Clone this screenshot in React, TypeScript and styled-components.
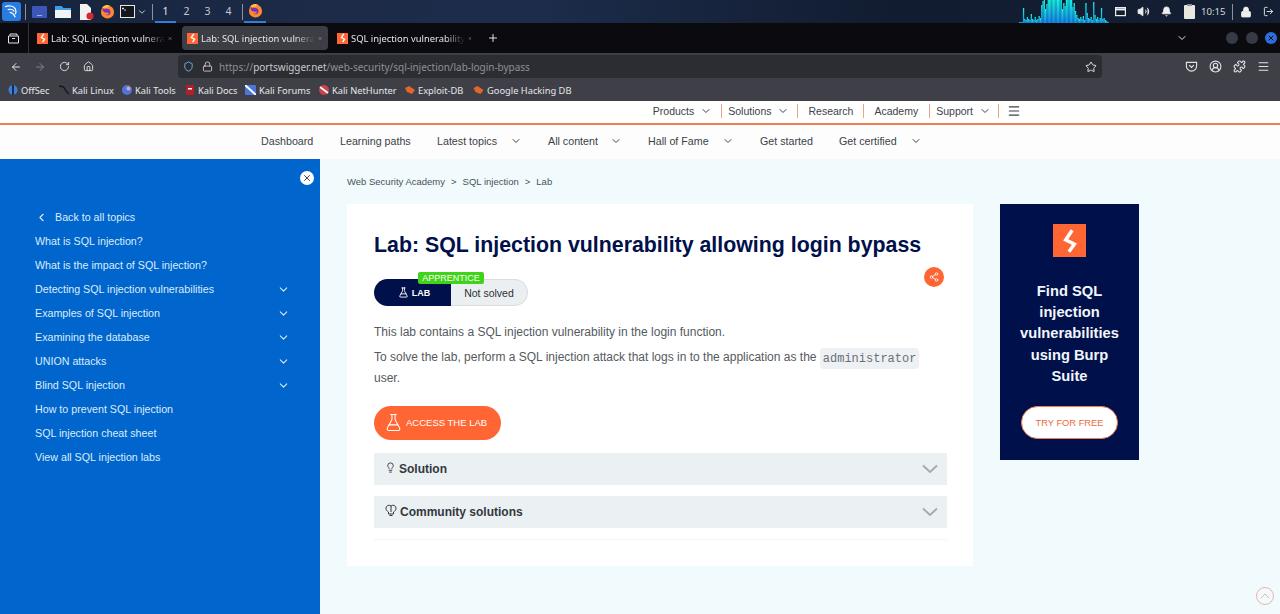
import { FC, ReactNode } from "react";
import styled, { createGlobalStyle } from "styled-components";
import {
  ArrowLeft,
  ArrowRight,
  Bell,
  ChevronDown,
  ChevronLeft,
  ChevronUp,
  FlaskConical,
  House,
  Lightbulb,
  Lock,
  LogOut,
  Menu,
  Plus,
  Puzzle,
  RotateCw,
  Share2,
  Shield,
  Star,
  Volume2,
  X,
  CircleUserRound,
} from "lucide-react";

const navy = "#00104a";
const orange = "#ff6633";
const sans = `"Liberation Sans", Arial, sans-serif`;
const ui = `"Noto Sans", "Open Sans", sans-serif`;

const GlobalStyle = createGlobalStyle`
  html, body {
    margin: 0;
    height: 100%;
    overflow: hidden;
    background: #f1fbfd;
    font-family: ${sans};
  }
  * { box-sizing: border-box; }
`;

const Page = styled.div`
  width: 1280px;
  height: 614px;
  display: flex;
  flex-direction: column;
  overflow: hidden;
  position: relative;
`;

/* desktop panel */
const Panel = styled.div`
  height: 23px;
  flex: none;
  display: flex;
  align-items: center;
  padding: 0 1px 0 2px;
  color: #e6e8ec;
  background: linear-gradient(90deg, #17233c 0%, #1d2b48 25%, #1c2c4a 42%, #111c30 70%, #141f33 100%);
`;

const KaliLogo = styled.div`
  width: 19px;
  height: 19px;
  border-radius: 3px;
  background: #2a7de0;
  display: flex;
  align-items: center;
  justify-content: center;
`;

const PanelSep = styled.div<{ $l: number; $r: number }>`
  width: 1px;
  height: 16px;
  flex: none;
  background: #8b93a3;
  margin: 0 ${(p) => p.$r}px 0 ${(p) => p.$l}px;
`;

const AppGroup = styled.div`
  display: flex;
  align-items: center;
`;

const AppSlot = styled.div<{ $w: number }>`
  width: ${(p) => p.$w}px;
  display: flex;
  align-items: center;
  justify-content: flex-start;
`;

const ActiveApp = styled.div`
  width: 22px;
  height: 23px;
  display: flex;
  align-items: center;
  justify-content: center;
  border-bottom: 2px solid #2f7de0;
`;

const Workspace = styled.div<{ $on?: boolean }>`
  width: 21px;
  height: 23px;
  font: 10.5px ${ui};
  color: ${(p) => (p.$on ? "#e8e8e8" : "#c3c8d2")};
  display: flex;
  align-items: center;
  justify-content: center;
  border-bottom: ${(p) => (p.$on ? "2px solid #2f7de0" : "2px solid transparent")};
`;

const TraySlot = styled.div<{ $w: number }>`
  width: ${(p) => p.$w}px;
  flex: none;
  display: flex;
  align-items: center;
  justify-content: center;
`;

const Clock = styled.span`
  width: 23px;
  font: 9.6px ${ui};
  color: #d6d9df;
  white-space: nowrap;
`;

/* browser chrome */
const TabStrip = styled.div`
  height: 30px;
  flex: none;
  background: #0b0b0f;
  display: flex;
  align-items: center;
  color: #e6e6e9;
`;

const TabPicker = styled.div`
  width: 29px;
  height: 100%;
  margin-right: 3px;
  display: flex;
  align-items: center;
  justify-content: center;
  padding: 0 2px 0 0;
  border-right: 1px solid #34343a;
`;

const Tab = styled.div<{ $active?: boolean }>`
  width: 146px;
  height: 24px;
  margin-right: 4px;
  padding: 0 5px;
  display: flex;
  align-items: center;
  gap: 3px;
  border-radius: 4px;
  background: ${(p) => (p.$active ? "#3d3e45" : "transparent")};
`;

const TabTitle = styled.span`
  flex: 1;
  font: 9.4px ${ui};
  white-space: nowrap;
  -webkit-mask-image: linear-gradient(90deg, #000 82%, transparent 100%);
  mask-image: linear-gradient(90deg, #000 82%, transparent 100%);
`;

const Favicon = styled.div`
  width: 11px;
  height: 11px;
  flex: none;
  background: ${orange};
  display: flex;
  align-items: center;
  justify-content: center;
`;

const WindowButtons = styled.div`
  margin-left: auto;
  display: flex;
  align-items: center;
  padding-right: 3px;
`;

const WindowDot = styled.div<{ $close?: boolean }>`
  width: 12px;
  height: 12px;
  margin-left: 7.5px;
  border-radius: 50%;
  background: ${(p) => (p.$close ? "#2a6fe0" : "#363a46")};
  color: #0b0b0f;
  display: flex;
  align-items: center;
  justify-content: center;
`;

const Toolbar = styled.div`
  height: 27px;
  flex: none;
  background: #3f4047;
  display: flex;
  align-items: center;
  padding-left: 8px;
  color: #e3e3e6;
`;

const NavButton = styled.div<{ $dim?: boolean }>`
  width: 16px;
  margin-right: 8px;
  display: flex;
  justify-content: center;
  opacity: ${(p) => (p.$dim ? 0.4 : 1)};
`;

const UrlBar = styled.div`
  width: 924px;
  height: 23px;
  margin-left: 74px;
  border-radius: 4px;
  background: #2c2d33;
  display: flex;
  align-items: center;
  padding: 0 5px;
  font: 9.95px ${ui};
  color: #8f9097;
`;

const UrlHost = styled.span`
  color: #c9c9ce;
`;

const UrlText = styled.span`
  margin-left: 6px;
  flex: 1;
`;

const ToolIcons = styled.div`
  display: flex;
  gap: 11px;
  margin-left: 83px;
`;

const Bookmarks = styled.div`
  height: 21px;
  flex: none;
  background: #3f4047;
  display: flex;
  align-items: center;
  padding: 0 0 1px 8px;
  font: 9.3px ${ui};
  color: #e6e6e9;
`;

const Bookmark = styled.div<{ $w: number }>`
  width: ${(p) => p.$w}px;
  flex: none;
  display: flex;
  align-items: center;
  gap: 3px;
  white-space: nowrap;
`;

/* site navigation */
const TopNav = styled.div`
  height: 24px;
  flex: none;
  padding: 0 259px 2px 0;
  background: #fff;
  border-bottom: 2px solid #ec7e52;
  display: flex;
  justify-content: flex-end;
  align-items: center;
  font-size: 10.5px;
  color: #3c4146;
`;

const TopNavItem = styled.div<{ $pad: string; $last?: boolean }>`
  display: flex;
  align-items: center;
  gap: 6px;
  height: 14px;
  padding: ${(p) => p.$pad};
  border-right: ${(p) => (p.$last ? "none" : "1px solid #eda587")};
`;

const SubNav = styled.div`
  height: 34px;
  flex: none;
  padding: 0 0 2px 261px;
  background: #fdfdfd;
  display: flex;
  align-items: center;
  font-size: 10.7px;
  color: #3c4146;
`;

const SubNavItem = styled.div<{ $w: number; $more?: boolean }>`
  width: ${(p) => p.$w}px;
  display: flex;
  align-items: center;
  justify-content: space-between;
  padding-right: ${(p) => (p.$more ? 26 : 0)}px;
  white-space: nowrap;
`;

/* body */
const Body = styled.div`
  flex: 1;
  display: flex;
  min-height: 0;
  background: #f1fbfd;
`;

const Sidebar = styled.aside`
  width: 320px;
  flex: none;
  background: #0065cc;
  color: #dcecfb;
  font-size: 10.7px;
  padding: 12px 0 0 35px;
  display: flex;
  flex-direction: column;
`;

const SideClose = styled.div`
  width: 14px;
  height: 14px;
  align-self: flex-end;
  margin: 0 6px 0 0;
  border-radius: 50%;
  background: #fff;
  color: #444;
  display: flex;
  align-items: center;
  justify-content: center;
`;

const SideList = styled.nav`
  margin-top: 20px;
  width: 255px;
`;

const SideRow = styled.div`
  height: 24px;
  display: flex;
  align-items: center;
  justify-content: space-between;
`;

const BackRow = styled(SideRow)`
  justify-content: flex-start;
  gap: 7px;
`;

const Main = styled.main`
  flex: 1;
  padding: 16px 0 0 27px;
`;

const Crumbs = styled.div`
  font-size: 9.5px;
  line-height: 13px;
  color: #4a5058;
  display: flex;
  gap: 6px;
  margin-bottom: 16px;
`;

const Columns = styled.div`
  display: flex;
  align-items: flex-start;
  gap: 27px;
`;

const Card = styled.article`
  position: relative;
  width: 626px;
  height: 362px;
  padding: 28px 26px 0 27px;
  background: #fff;
`;

const Title = styled.h1`
  margin: 0;
  font-size: 21.33px;
  line-height: 26px;
  font-weight: 700;
  color: ${navy};
  white-space: nowrap;
`;

const ShareBadge = styled.div`
  position: absolute;
  top: 63px;
  left: 577px;
  width: 20px;
  height: 20px;
  border-radius: 50%;
  background: ${orange};
  color: #fff;
  display: flex;
  align-items: center;
  justify-content: center;
`;

const LabPill = styled.div`
  position: relative;
  width: 154px;
  height: 27px;
  margin-top: 21px;
  border-radius: 14px;
  display: flex;
  font-size: 10.5px;
`;

const LabSide = styled.div`
  width: 77px;
  background: ${navy};
  color: #fff;
  border-radius: 14px 0 0 14px;
  display: flex;
  align-items: center;
  justify-content: center;
  gap: 3px;
  padding: 0 0 0 3px;
  font-size: 9px;
  font-weight: 700;
`;

const StatusSide = styled.div`
  flex: 1;
  background: #ebeff2;
  border: 1px solid #d9dee2;
  border-left: none;
  border-radius: 0 14px 14px 0;
  color: #2c3033;
  display: flex;
  align-items: center;
  justify-content: center;
`;

const LevelTag = styled.span`
  position: absolute;
  top: -7px;
  left: 44px;
  width: 66px;
  height: 12px;
  border-radius: 2px;
  background: #3fd41a;
  color: #fff;
  font-size: 9px;
  line-height: 12px;
  text-align: center;
`;

const Copy = styled.p`
  margin: 16px 0 0;
  font-size: 12px;
  line-height: 20px;
  color: #555a60;
  width: 560px;
`;

const CopyNext = styled(Copy)`
  margin-top: 5px;
`;

const Code = styled.code`
  font-family: "Liberation Mono", "Courier New", monospace;
  font-size: 12px;
  padding: 3.5px 3px;
  border-radius: 4px;
  background: #eef1f4;
  color: #6a6f75;
`;

const AccessButton = styled.div`
  width: 127px;
  height: 34px;
  margin-top: 18px;
  padding: 0 0 1px 10px;
  border-radius: 17px;
  background: ${orange};
  color: #fff;
  font-size: 9.5px;
  display: flex;
  align-items: center;
  gap: 3px;
`;

const Accordion = styled.div<{ $gap: number }>`
  height: 32px;
  margin-top: ${(p) => p.$gap}px;
  width: 573px;
  padding: 0 9px 0 11px;
  background: #ebf0f2;
  color: #33383d;
  font-size: 12px;
  font-weight: 700;
  display: flex;
  align-items: center;
  gap: 3px;
`;

const AccordionIcon = styled.span`
  display: flex;
  margin: -4px 0 0 0;
`;

const AccordionLabel = styled.span`
  flex: 1;
`;

const Rule = styled.hr`
  width: 573px;
  margin: 11px 0 0;
  border: none;
  border-top: 1px solid #f2f4f6;
`;

const Ad = styled.aside`
  width: 139px;
  height: 256px;
  padding-top: 20px;
  background: ${navy};
  display: flex;
  flex-direction: column;
  align-items: center;
`;

const AdLogo = styled.div`
  width: 33px;
  height: 33px;
  background: ${orange};
  display: flex;
  align-items: center;
  justify-content: center;
`;

const AdText = styled.div`
  margin-top: 24px;
  width: 110px;
  text-align: center;
  font-size: 14.7px;
  line-height: 21.2px;
  font-weight: 700;
  color: #f2f6fb;
`;

const AdButton = styled.div`
  margin-top: 19px;
  width: 97px;
  height: 33px;
  border-radius: 17px;
  background: #fff;
  border: 1.5px solid #ec7e52;
  color: #ec6a3c;
  font-size: 9.3px;
  display: flex;
  align-items: center;
  justify-content: center;
`;

const ScrollTop = styled.div`
  position: absolute;
  right: 6px;
  bottom: 9px;
  width: 18px;
  height: 18px;
  border-radius: 50%;
  border: 1px solid #efb3a5;
  color: #e89c8a;
  display: flex;
  align-items: center;
  justify-content: center;
`;

const Bolt: FC<{ size: number }> = ({ size }) => (
  <svg width={size} height={size} viewBox="0 0 24 24" fill="none" stroke="#fff" strokeWidth="3.2">
    <path d="M14 2 8 11l8 4-5 7" />
  </svg>
);

const Firefox: FC = () => (
  <svg width="15" height="15" viewBox="0 0 16 16">
    <circle cx="8" cy="8.5" r="7" fill="#ff8a2a" />
    <path d="M3 4c1 2 2 1 4 1 3 0 5 2 4 5-1 2-4 3-6 1 3 1 5 0 4-2-2 1-5 0-6-2z" fill="#7b2cc4" />
    <path d="M2 4c2-3 6-4 9-2-2 0-3 1-3 2-3 0-4 0-6 0z" fill="#ffcb3d" />
  </svg>
);

const AccordionChevron: FC = () => (
  <svg width="16" height="10" viewBox="0 0 16 10" fill="none" stroke="#a3a8ad" strokeWidth="1.8">
    <path d="M1 1.5 8 8l7-6.5" />
  </svg>
);

const DoubleBulb: FC = () => (
  <svg width="12" height="12" viewBox="0 0 12 12" fill="none" stroke="#33383d" strokeWidth="1">
    <path d="M3.5 8C2 7 1 6 1 4.2A3 3 0 0 1 6 2a3 3 0 0 1 5 2.2C11 6 10 7 8.5 8v2h-5zM6 2v6M4.5 11.5h3" />
  </svg>
);

const Spectrum: FC = () => {
  const bars = [
    1, 1, 1, 15, 4, 3, 6, 4, 3, 9, 4, 3, 6, 3, 4, 7, 5, 18, 22, 23, 14, 19, 23, 23, 23, 23, 23, 23,
    23, 23, 23, 23, 23, 14, 20, 17, 23, 23, 23, 23, 23, 16, 20, 12, 8, 5, 4, 6, 4, 7, 3, 20, 10, 5,
    4, 6, 3, 21, 8, 4, 6, 3, 5, 15, 4, 5, 3, 2, 1,
  ];
  return (
    <svg width="90" height="23" viewBox="0 0 90 23" style={{ marginLeft: "auto" }}>
      <defs>
        <linearGradient id="spectrum" x1="0" y1="0" x2="0" y2="1">
          <stop offset="0" stopColor="#14f0e2" />
          <stop offset="1" stopColor="#1488ee" />
        </linearGradient>
      </defs>
      {bars.map((h, i) => (
        <rect key={i} x={i * 1.3} y={23 - h} width="1.3" height={h} fill="url(#spectrum)" />
      ))}
    </svg>
  );
};

const tabs = [
  { title: "Lab: SQL injection vulnera" },
  { title: "Lab: SQL injection vulnera", active: true },
  { title: "SQL injection vulnerability" },
];

const bookmarkIcons: Record<string, ReactNode> = {
  OffSec: (
    <svg width="10" height="10" viewBox="0 0 10 10">
      <ellipse cx="5" cy="5" rx="4.5" ry="5" fill="#3d7fd0" />
      <rect x="4" width="2" height="10" fill="#1b2b55" />
    </svg>
  ),
  "Kali Linux": (
    <svg width="10" height="10" viewBox="0 0 10 10" fill="none" stroke="#15171c" strokeWidth="1.4">
      <path d="M0 1c3 0 5 1 6 3l1 2 3 3" />
    </svg>
  ),
  "Kali Tools": (
    <svg width="10" height="10" viewBox="0 0 10 10">
      <circle cx="5" cy="5" r="5" fill="#4d76d8" />
      <circle cx="6.5" cy="3.5" r="2" fill="#e8a0a8" />
    </svg>
  ),
  "Kali Docs": (
    <svg width="10" height="10" viewBox="0 0 10 10">
      <rect x="1" width="8" height="10" rx="1" fill="#b0202a" />
      <rect x="3" y="3" width="4" height="1.5" fill="#fff" />
    </svg>
  ),
  "Kali Forums": (
    <svg width="11" height="10" viewBox="0 0 11 10">
      <rect width="11" height="10" rx="1" fill="#4d76d8" />
      <path d="M0 0l11 10" stroke="#fff" strokeWidth="2" />
    </svg>
  ),
  "Kali NetHunter": (
    <svg width="10" height="10" viewBox="0 0 10 10">
      <circle cx="5" cy="5" r="5" fill="#c9424a" />
      <path d="M1 2l8 6" stroke="#fff" strokeWidth="1.6" />
    </svg>
  ),
  "Exploit-DB": (
    <svg width="10" height="8" viewBox="0 0 10 8">
      <path d="M0 2l4-2 6 4-3 4-5-2z" fill="#e0662a" />
    </svg>
  ),
  "Google Hacking DB": (
    <svg width="11" height="8" viewBox="0 0 10 8">
      <path d="M0 2l4-2 6 4-3 4-5-2z" fill="#e0662a" />
    </svg>
  ),
};

const bookmarks = [
  { label: "OffSec", w: 51 },
  { label: "Kali Linux", w: 63 },
  { label: "Kali Tools", w: 63 },
  { label: "Kali Docs", w: 60 },
  { label: "Kali Forums", w: 74 },
  { label: "Kali NetHunter", w: 86 },
  { label: "Exploit-DB", w: 68 },
  { label: "Google Hacking DB", w: 110 },
];

const sideLinks = [
  { label: "What is SQL injection?" },
  { label: "What is the impact of SQL injection?" },
  { label: "Detecting SQL injection vulnerabilities", more: true },
  { label: "Examples of SQL injection", more: true },
  { label: "Examining the database", more: true },
  { label: "UNION attacks", more: true },
  { label: "Blind SQL injection", more: true },
  { label: "How to prevent SQL injection" },
  { label: "SQL injection cheat sheet" },
  { label: "View all SQL injection labs" },
];

const subNav = [
  { label: "Dashboard", w: 79 },
  { label: "Learning paths", w: 97 },
  { label: "Latest topics", w: 111, more: true },
  { label: "All content", w: 100, more: true },
  { label: "Hall of Fame", w: 112, more: true },
  { label: "Get started", w: 79 },
  { label: "Get certified", w: 109, more: true },
];

export default function App() {
  return (
    <Page>
      <GlobalStyle />
      <Panel>
        <KaliLogo>
          <svg width="15" height="15" viewBox="0 0 16 16" fill="none" stroke="#fff" strokeWidth="1.3">
            <path d="M1 3c4-2 9-1 11 2 1 2 1 4 0 6M4 6c3-1 6 0 7 2M6 9c2 0 4 1 6 5" />
          </svg>
        </KaliLogo>
        <PanelSep $l={4} $r={6} />
        <AppGroup>
          <AppSlot $w={23}>
            <svg width="15" height="12" viewBox="0 0 15 12">
              <rect width="15" height="12" rx="1" fill="#3d57b8" />
              <rect x="5" y="9" width="5" height="1" fill="#9fb0ea" />
            </svg>
          </AppSlot>
          <AppSlot $w={24}>
            <svg width="16" height="13" viewBox="0 0 16 13">
              <path d="M0 1h6l2 2h8v10H0z" fill="#f1f2f4" />
              <path d="M0 1h6l2 2h8v2H0z" fill="#3d9ce8" />
            </svg>
          </AppSlot>
          <AppSlot $w={21}>
            <svg width="15" height="16" viewBox="0 0 15 16">
              <path d="M1 0h7l4 4v12H1z" fill="#f2f2f2" />
              <circle cx="11" cy="12" r="3.6" fill="#d22a30" />
            </svg>
          </AppSlot>
          <AppSlot $w={20}>
            <Firefox />
          </AppSlot>
          <AppSlot $w={17}>
            <svg width="15" height="13" viewBox="0 0 15 13">
              <rect x=".5" y=".5" width="14" height="12" fill="#14161c" stroke="#e8e8e8" />
              <path d="M2.5 3h1v1h-1zM4 5h2" stroke="#fff" strokeWidth=".8" />
            </svg>
          </AppSlot>
          <ChevronDown size={10} />
        </AppGroup>
        <PanelSep $l={5} $r={2} />
        <Workspace $on>1</Workspace>
        <Workspace>2</Workspace>
        <Workspace>3</Workspace>
        <Workspace>4</Workspace>
        <PanelSep $l={3} $r={1} />
        <ActiveApp>
          <Firefox />
        </ActiveApp>
        <Spectrum />
        <TraySlot $w={23}>
          <svg width="11" height="10" viewBox="0 0 11 10" fill="none" stroke="#eee" strokeWidth="1.2">
            <rect x=".6" y=".6" width="9.8" height="8" />
            <path d="M.6 2.4h9.8" strokeWidth="2" />
          </svg>
        </TraySlot>
        <TraySlot $w={23}>
          <Volume2 size={13} fill="#eee" strokeWidth={1.6} />
        </TraySlot>
        <TraySlot $w={23}>
          <Bell size={11} fill="#eee" />
        </TraySlot>
        <TraySlot $w={23}>
          <svg width="11" height="15" viewBox="0 0 11 15">
            <rect y="1" width="11" height="14" rx="1" fill="#e8e8e0" />
            <rect x="3" width="5" height="2" fill="#8a8f98" />
          </svg>
        </TraySlot>
        <Clock>10:15</Clock>
        <PanelSep $l={8} $r={2} />
        <TraySlot $w={22}>
          <Lock size={12} fill="#eee" strokeWidth={1.6} />
        </TraySlot>
        <TraySlot $w={22}>
          <LogOut size={11} />
        </TraySlot>
      </Panel>

      <TabStrip>
        <TabPicker>
          <svg width="11" height="11" viewBox="0 0 11 11" fill="none" stroke="#e6e6e9" strokeWidth="1">
            <path d="M2 2.5V1h7v1.5M.5 3h10v7H.5zM4 5.5h3" />
          </svg>
        </TabPicker>
        {tabs.map((tab, i) => (
          <Tab key={i} $active={tab.active}>
            <Favicon>
              <Bolt size={10} />
            </Favicon>
            <TabTitle>{tab.title}</TabTitle>
            <X size={11} style={{ marginRight: 1 }} />
          </Tab>
        ))}
        <Plus size={12} style={{ marginLeft: 5 }} />
        <WindowButtons>
          <ChevronDown size={12} style={{ marginRight: 31 }} />
          <WindowDot />
          <WindowDot />
          <WindowDot $close>
            <X size={8} strokeWidth={3} />
          </WindowDot>
        </WindowButtons>
      </TabStrip>

      <Toolbar>
        <NavButton>
          <ArrowLeft size={12} />
        </NavButton>
        <NavButton $dim>
          <ArrowRight size={12} />
        </NavButton>
        <NavButton>
          <RotateCw size={11} />
        </NavButton>
        <NavButton>
          <House size={11} />
        </NavButton>
        <UrlBar>
          <Shield size={11} color="#6fb6f2" />
          <Lock size={11} color="#c9c9ce" style={{ marginLeft: 8 }} />
          <UrlText>
            https://<UrlHost>portswigger.net</UrlHost>/web-security/sql-injection/lab-login-bypass
          </UrlText>
          <Star size={12} color="#e3e3e6" />
        </UrlBar>
        <ToolIcons>
          <svg width="13" height="13" viewBox="0 0 14 14" fill="none" stroke="#e3e3e6" strokeWidth="1.2">
            <path d="M1.5 2.5h11v4a5.5 5.5 0 0 1-11 0zM4.5 5.5 7 8l2.5-2.5" />
          </svg>
          <CircleUserRound size={13} />
          <Puzzle size={13} />
          <Menu size={13} />
        </ToolIcons>
      </Toolbar>

      <Bookmarks>
        {bookmarks.map((b) => (
          <Bookmark key={b.label} $w={b.w}>
            {bookmarkIcons[b.label]}
            {b.label}
          </Bookmark>
        ))}
      </Bookmarks>

      <TopNav>
        <TopNavItem $pad="0 9px 0 0">
          Products <ChevronDown size={12} />
        </TopNavItem>
        <TopNavItem $pad="0 8px 0 6px">
          Solutions <ChevronDown size={12} />
        </TopNavItem>
        <TopNavItem $pad="0 10px 0 10px">Research</TopNavItem>
        <TopNavItem $pad="0 11px 0 10px">Academy</TopNavItem>
        <TopNavItem $pad="0 7px 0 6px">
          Support <ChevronDown size={12} />
        </TopNavItem>
        <TopNavItem $last $pad="0 0 0 8px">
          <Menu size={14} />
        </TopNavItem>
      </TopNav>

      <SubNav>
        {subNav.map((item) => (
          <SubNavItem key={item.label} $w={item.w} $more={item.more}>
            {item.label}
            {item.more && <ChevronDown size={12} />}
          </SubNavItem>
        ))}
      </SubNav>

      <Body>
        <Sidebar>
          <SideClose>
            <X size={10} strokeWidth={2.4} />
          </SideClose>
          <SideList>
            <BackRow>
              <ChevronLeft size={13} />
              Back to all topics
            </BackRow>
            {sideLinks.map((link) => (
              <SideRow key={link.label}>
                {link.label}
                {link.more && <ChevronDown size={13} />}
              </SideRow>
            ))}
          </SideList>
        </Sidebar>

        <Main>
          <Crumbs>
            <span>Web Security Academy</span>
            <span>&gt;</span>
            <span>SQL injection</span>
            <span>&gt;</span>
            <span>Lab</span>
          </Crumbs>
          <Columns>
            <Card>
              <Title>Lab: SQL injection vulnerability allowing login bypass</Title>
              <ShareBadge>
                <Share2 size={10} />
              </ShareBadge>
              <LabPill>
                <LevelTag>APPRENTICE</LevelTag>
                <LabSide>
                  <FlaskConical size={11} /> LAB
                </LabSide>
                <StatusSide>Not solved</StatusSide>
              </LabPill>
              <Copy>This lab contains a SQL injection vulnerability in the login function.</Copy>
              <CopyNext>
                To solve the lab, perform a SQL injection attack that logs in to the application as
                the <Code>administrator</Code> user.
              </CopyNext>
              <AccessButton>
                <FlaskConical size={19} strokeWidth={1.3} />
                ACCESS THE LAB
              </AccessButton>
              <Accordion $gap={13}>
                <AccordionIcon>
                  <Lightbulb size={11} />
                </AccordionIcon>
                <AccordionLabel>Solution</AccordionLabel>
                <AccordionChevron />
              </Accordion>
              <Accordion $gap={11}>
                <AccordionIcon>
                  <DoubleBulb />
                </AccordionIcon>
                <AccordionLabel>Community solutions</AccordionLabel>
                <AccordionChevron />
              </Accordion>
              <Rule />
            </Card>
            <Ad>
              <AdLogo>
                <Bolt size={26} />
              </AdLogo>
              <AdText>Find SQL injection vulnerabilities using Burp Suite</AdText>
              <AdButton>TRY FOR FREE</AdButton>
            </Ad>
          </Columns>
        </Main>
      </Body>
      <ScrollTop>
        <ChevronUp size={16} strokeWidth={1.2} />
      </ScrollTop>
    </Page>
  );
}
